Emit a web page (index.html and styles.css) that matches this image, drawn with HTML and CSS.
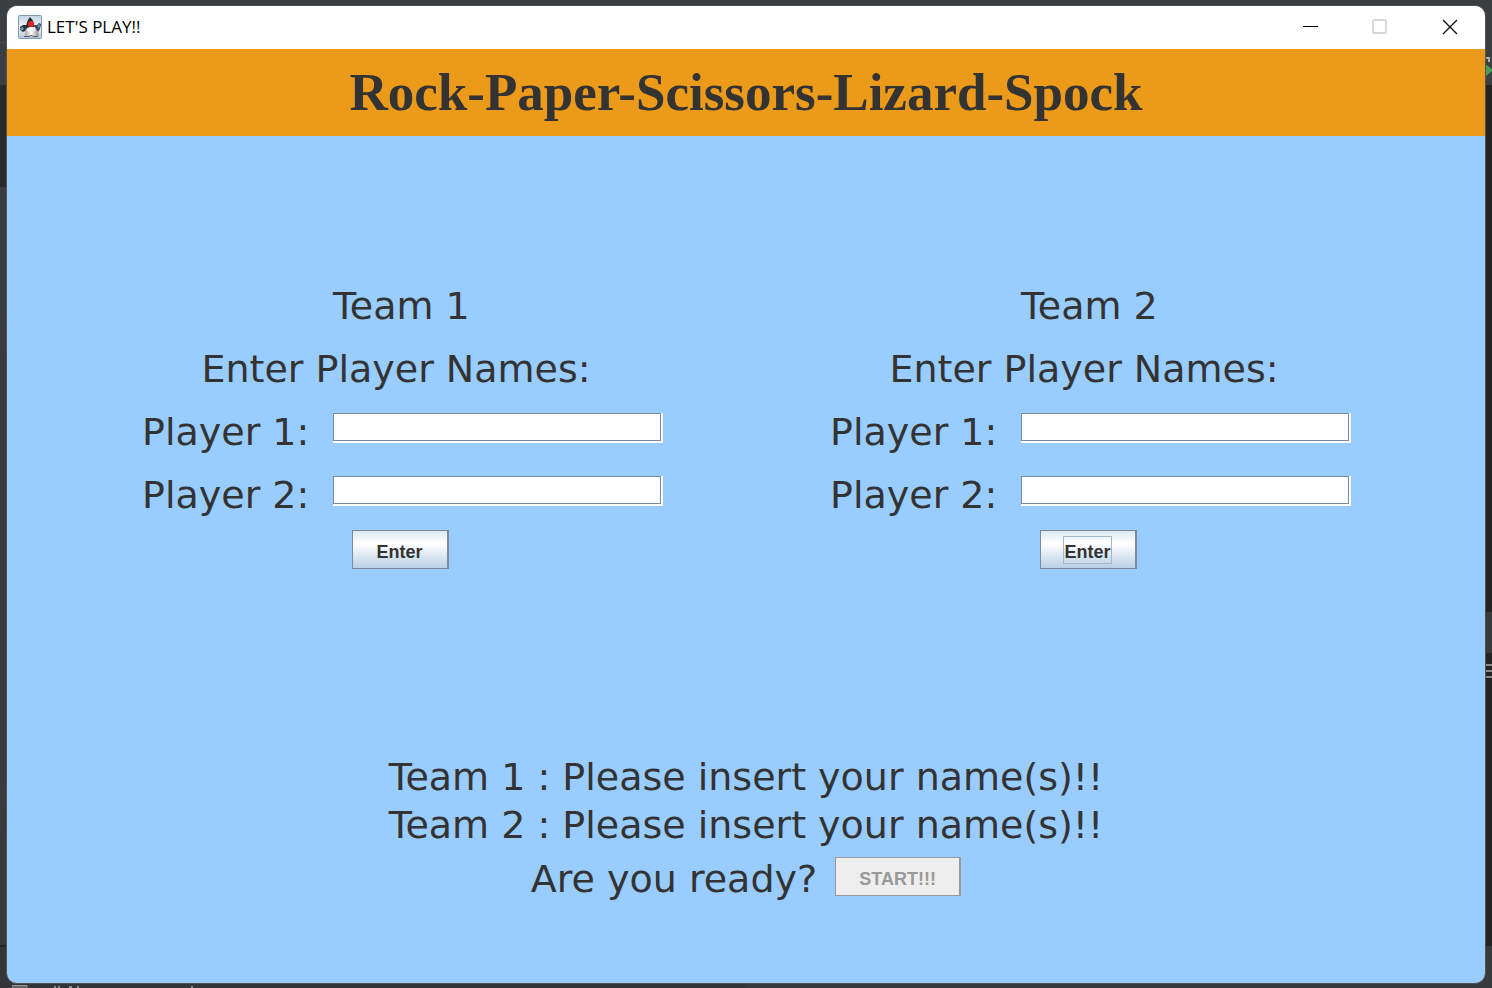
FILE: index.html
```html
<!DOCTYPE html>
<html lang="en">
<head>
<meta charset="utf-8">
<title>LET'S PLAY!!</title>
<link rel="stylesheet" href="styles.css">
</head>
<body>
<svg class="play-edge" viewBox="0 0 7 24" aria-hidden="true"><path d="M0 1h4v4" fill="none" stroke="#aaacad" stroke-width="2"/><path d="M0 7l7 5v2l-7 6z" fill="#499c54"/></svg>
<svg class="menu-edge" viewBox="0 0 7 16" aria-hidden="true"><path d="M0 2h7M0 8h7M0 14h7" stroke="#a9abad" stroke-width="1.4"/></svg>
<svg class="task-edge" viewBox="0 0 200 3" aria-hidden="true"><path d="M0 3V.5h15V3" fill="#666" stroke="#999"/><path d="M42 1h2v2h-2zM46 1h2v2h-2zM57 1h3v2h-3zM65 1h2v2h-2zM179 1h2v2h-2z" fill="#8b8d90"/></svg>
<div class="window">
  <div class="titlebar">
    <svg class="duke" viewBox="0 0 24 24" aria-hidden="true">
      <defs>
        <linearGradient id="tile" x1="0" y1="0" x2="0" y2="1"><stop offset="0" stop-color="#c3d4e4"/><stop offset=".5" stop-color="#f0f4f8"/><stop offset="1" stop-color="#b4c8da"/></linearGradient>
        <linearGradient id="belly" x1="0" y1="0" x2="1" y2="0"><stop offset="0" stop-color="#a5a5a5"/><stop offset=".45" stop-color="#fff"/><stop offset="1" stop-color="#8c8c8c"/></linearGradient>
      </defs>
      <rect x=".5" y=".5" width="23" height="23" rx="1" fill="url(#tile)" stroke="#7d98b4"/>
      <path d="M9 10L5 10 2 12 2 15 5 17 9 15z" fill="#26323b"/>
      <path d="M16 10l3 0 2-2 2 1-1 5-2 3-4-3z" fill="#39444c"/>
      <path d="M2 13l3-1 1 2-3 2zM19 11l2-2 1 1-1 4z" fill="#6f93b3"/>
      <path d="M8 12Q7 17 7 22l4-1 6 1 4-1Q20 15 16 11z" fill="url(#belly)"/>
      <path d="M12 2Q8 7 8 14l3-1 5 0Q17 7 12 2z" fill="#29292b"/>
      <path d="M9 13l3-1 4 0 1 3-4 2-4-1z" fill="#f2f2f2"/>
      <circle cx="13" cy="9" r="3" fill="#e02525"/>
      <path d="M6 21.500h5l2-1 3 1h4" fill="none" stroke="#555"/>
    </svg>
    <span class="caption">LET'S PLAY!!</span>
    <div class="controls">
      <button class="control" type="button" aria-label="Minimize"><svg viewBox="0 0 16 16"><path d="M1 7.500h15" stroke="#000"/></svg></button>
      <button class="control" type="button" aria-label="Maximize" disabled><svg viewBox="0 0 16 16"><rect x="1" y="1" width="13" height="13" rx="1" fill="none" stroke="#c9c9c9" stroke-width="1.300"/></svg></button>
      <button class="control" type="button" aria-label="Close"><svg viewBox="0 0 16 16"><path d="M1 1l14 14M15 1L1 15" stroke="#111" stroke-width="1.400"/></svg></button>
    </div>
  </div>
  <header class="banner"><h1 class="title">Rock-Paper-Scissors-Lizard-Spock</h1></header>
  <main class="content">
    <div class="teams">
      <form class="team">
        <h2 class="team-name">Team 1</h2>
        <p class="prompt">Enter Player Names:</p>
        <label class="label" for="t1p1">Player 1:</label><input class="field" id="t1p1" type="text">
        <label class="label" for="t1p2">Player 2:</label><input class="field" id="t1p2" type="text">
        <button class="btn enter" type="button">Enter</button>
      </form>
      <form class="team">
        <h2 class="team-name">Team 2</h2>
        <p class="prompt">Enter Player Names:</p>
        <label class="label" for="t2p1">Player 1:</label><input class="field" id="t2p1" type="text">
        <label class="label" for="t2p2">Player 2:</label><input class="field" id="t2p2" type="text">
        <button class="btn enter" type="button"><span class="focus-ring">Enter</span></button>
      </form>
    </div>
    <section class="status">
      <p class="message">Team 1 : Please insert your name(s)!!</p>
      <p class="message">Team 2 : Please insert your name(s)!!</p>
      <div class="ready">
        <span class="message">Are you ready?</span>
        <button class="btn start" type="button" disabled>START!!!</button>
      </div>
    </section>
  </main>
</div>
</body>
</html>
```
FILE: styles.css
```css
* { box-sizing: border-box; }

body {
  margin: 0;
  min-height: 100vh;
  padding: 5px 6px 4px;
  display: flex;
  position: relative;
  color: #333;
  background:
    linear-gradient(#3c3f41 85px, #242424 85px, #242424 612px, #37393b 612px, #37393b 653px, #242424 653px, #242424 946px, #37393b 946px) right / 50% 100% no-repeat,
    linear-gradient(#3c3f41 42px, #4a4c4e 42px, #4a4c4e 43px, #3c3f41 43px, #3c3f41 85px, #292a2b 85px, #292a2b 187px, #3a3d3f 187px, #37393b 945px, #252525 945px, #252525 947px, #333537 947px);
}

h1, h2, p { margin: 0; font-weight: normal; }

.play-edge, .menu-edge, .task-edge { position: absolute; }
.play-edge { right: 0; top: 57px; width: 7px; height: 24px; }
.menu-edge { right: 0; top: 663px; width: 7px; height: 16px; }
.task-edge { left: 12px; bottom: 0; width: 200px; height: 3px; }

.window {
  position: relative;
  flex: 1;
  display: flex;
  flex-direction: column;
  border: 1px solid #515253;
  border-radius: 11px;
  overflow: hidden;
  background: #99ccff;
}

.titlebar {
  display: flex;
  align-items: center;
  height: 43px;
  padding: 0 0 2px 11px;
  background: #fff;
}
.duke { width: 24px; height: 24px; }
.caption {
  margin-left: 5px;
  font: 17px/24px "Open Sans", "Noto Sans", sans-serif;
  color: #000;
}
.controls { display: flex; margin-left: auto; height: 100%; }
.control {
  width: 70px;
  padding: 0;
  border: 0;
  background: none;
  display: grid;
  place-items: center;
}
.control svg { width: 16px; height: 16px; }

.banner {
  height: 87px;
  padding-bottom: 2px;
  display: grid;
  place-items: center;
  background: #ec9a1a;
}
.title { font: bold 53px/60px "Liberation Serif", serif; }

.content {
  flex: 1;
  display: flex;
  flex-direction: column;
  font: 38px/44px "DejaVu Sans", Verdana, sans-serif;
}
.teams {
  flex: 1;
  display: flex;
  justify-content: center;
  align-items: center;
  gap: 168px;
}
.team {
  display: grid;
  grid-template-columns: 191px 329px;
  row-gap: 19px;
}
.team-name { grid-column: 2; font-size: 38px; }
.prompt { grid-column: 1 / -1; text-align: center; padding-right: 12px; }
.field {
  width: 328px;
  height: 28px;
  margin-top: 3px;
  padding: 0 4px;
  border: 1px solid #7a8a99;
  border-radius: 0;
  background: #fff;
  box-shadow: 0 2px #fff, 2px 0 #fff, 2px 2px #fff;
  font: 18px "Liberation Sans", Arial, sans-serif;
}
.btn {
  height: 39px;
  padding: 4px 0 0;
  border: 1px solid #7a8a99;
  border-right-width: 2px;
  background: linear-gradient(#dde8f3, #fff 32%, #fff 35%, #b8cfe5);
  color: #333;
  font: bold 18px/22px "Liberation Sans", Arial, sans-serif;
}
.enter {
  grid-column: 1 / -1;
  justify-self: center;
  width: 97px;
  margin: -6px 4px 0 0;
}
.focus-ring {
  display: inline-block;
  margin-top: -4px;
  padding: 4px 0 0;
  outline: 1px solid #a3b8cc;
}

.status {
  display: flex;
  flex-direction: column;
  align-items: center;
  padding: 36px 0 80px;
}
.message { line-height: 48px; }
.ready { display: flex; align-items: center; gap: 18px; padding-top: 6px; }
.start {
  width: 126px;
  margin-bottom: 5px;
  border-color: #999;
  background: #eee;
  color: #999;
}
```
